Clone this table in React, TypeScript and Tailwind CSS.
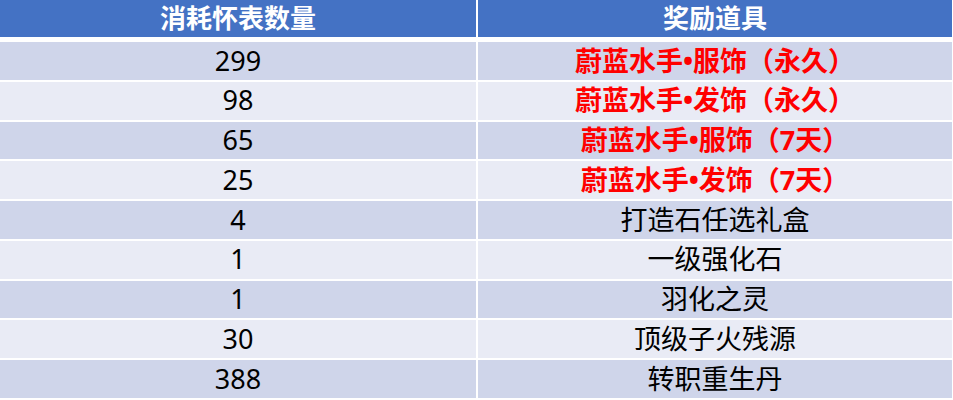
export default function App() {
  const rows = [
    { count: "299", item: "蔚蓝水手•服饰（永久）", hot: true },
    { count: "98", item: "蔚蓝水手•发饰（永久）", hot: true },
    { count: "65", item: "蔚蓝水手•服饰（7天）", hot: true },
    { count: "25", item: "蔚蓝水手•发饰（7天）", hot: true },
    { count: "4", item: "打造石任选礼盒", hot: false },
    { count: "1", item: "一级强化石", hot: false },
    { count: "1", item: "羽化之灵", hot: false },
    { count: "30", item: "顶级子火残源", hot: false },
    { count: "388", item: "转职重生丹", hot: false },
  ]

  return (
    <div
      className="w-[953px] h-[400px] overflow-hidden bg-white"
      style={{ fontFamily: '"Noto Sans", "Noto Sans CJK SC", sans-serif' }}
    >
      <div className="w-[952px]">
        {/* 表头 */}
        <div className="flex h-[40px] border-b-[3px] border-white bg-[#4472C4] text-white font-bold text-[26px]">
          <div className="w-[476px] flex items-center justify-center">消耗怀表数量</div>
          <div className="flex-1 flex items-center justify-center border-l-2 border-white">奖励道具</div>
        </div>

        {rows.map((row, i) => (
          <div
            key={i}
            className={
              "flex h-[39.75px] border-t-2 border-white text-[27px] " +
              (i % 2 === 0 ? "bg-[#CFD5EA]" : "bg-[#E9EBF5]")
            }
          >
            <div className="w-[476px] flex items-center justify-center text-black">{row.count}</div>
            <div
              className={
                "flex-1 flex items-center justify-center border-l-2 border-white " +
                (row.hot ? "text-[#FF0000] font-bold" : "text-black")
              }
            >
              {row.item}
            </div>
          </div>
        ))}
      </div>
    </div>
  )
}
